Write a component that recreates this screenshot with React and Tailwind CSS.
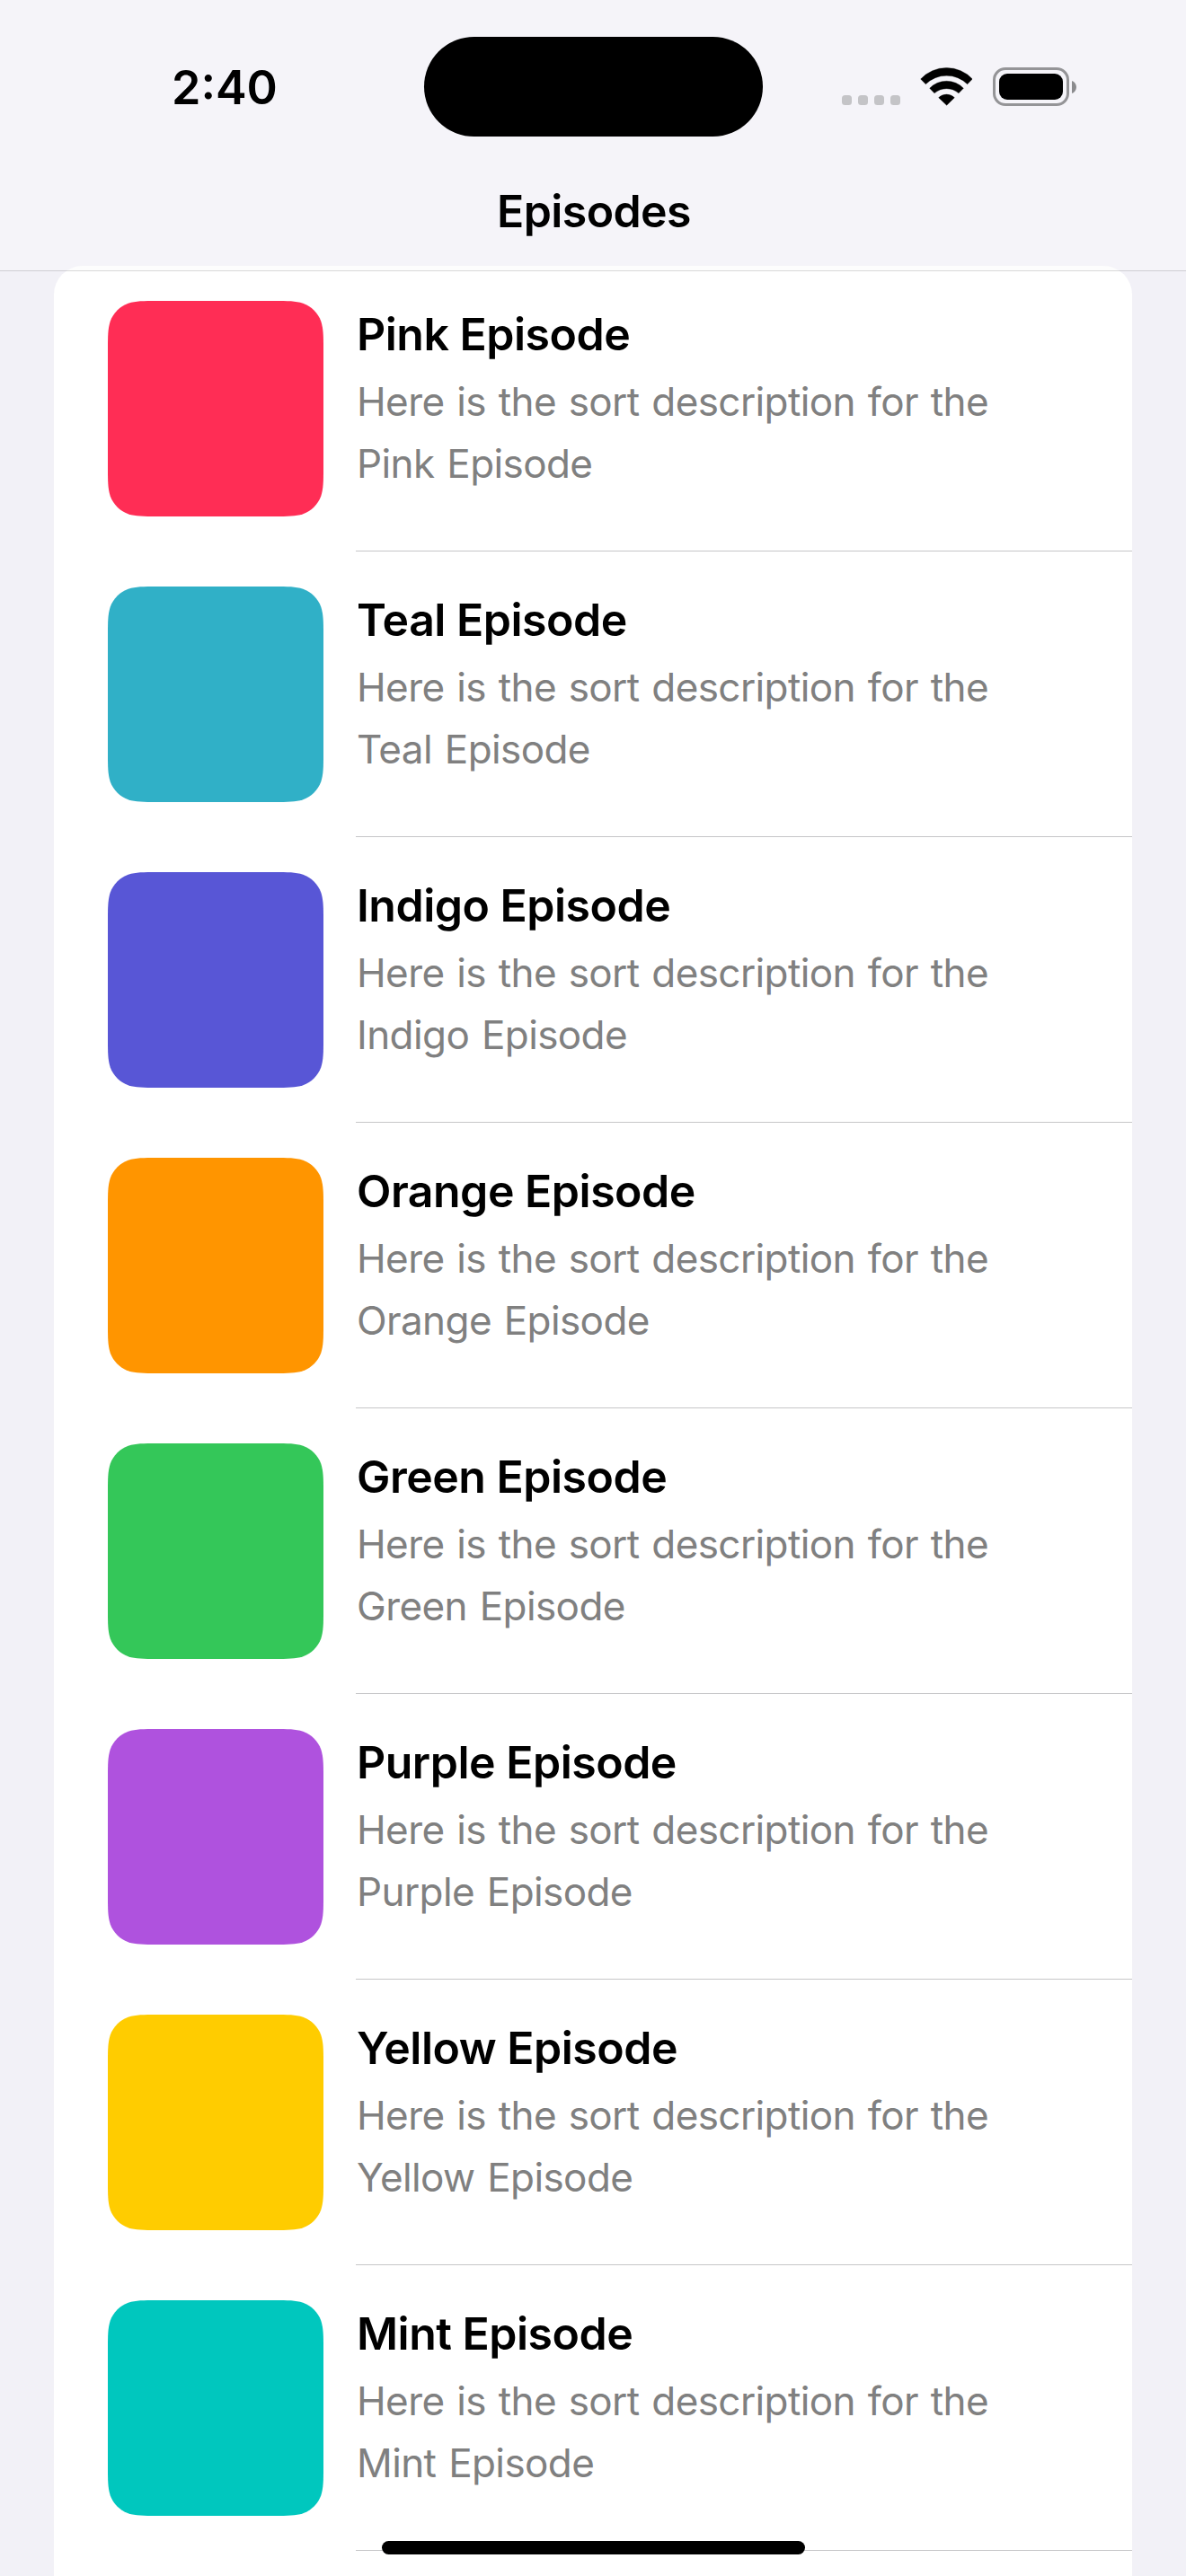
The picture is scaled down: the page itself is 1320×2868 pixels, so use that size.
const episodes = [
  { name: "Pink", fill: "fill-[#ff2d55]" },
  { name: "Teal", fill: "fill-[#30b0c7]" },
  { name: "Indigo", fill: "fill-[#5856d6]" },
  { name: "Orange", fill: "fill-[#ff9500]" },
  { name: "Green", fill: "fill-[#34c759]" },
  { name: "Purple", fill: "fill-[#af52de]" },
  { name: "Yellow", fill: "fill-[#ffcc00]" },
  { name: "Mint", fill: "fill-[#00c7be]" },
];

function CellularDots() {
  return (
    <div className="mt-[31px] flex gap-[7px]">
      {[0, 1, 2, 3].map((dot) => (
        <span key={dot} className="size-[11px] rounded-[3.5px] bg-[#c4c4c7]" />
      ))}
    </div>
  );
}

function WifiIcon() {
  return (
    <svg className="h-[43px] w-[58px]" viewBox="372 74 174 129">
      <path
        d="M374 113A118 118 0 0 1 547 113L530 130A99 99 0 0 0 391 130ZM404 144A78 78 0 0 1 517 144L501 160A62 62 0 0 0 420 160ZM434 175A38 38 0 0 1 487 175L461 201Z"
        fill="#000"
        stroke="#000"
        strokeWidth="1"
        strokeLinejoin="round"
      />
    </svg>
  );
}

function BatteryIcon() {
  return (
    <div className="flex items-center gap-[3px]">
      <div className="h-[43px] w-[85px] rounded-[14px] border-[3px] border-[#949497] p-1">
        <div className="h-[29px] w-[71px] rounded-[9px] bg-black" />
      </div>
      <svg className="h-[14px] w-[5px]" viewBox="0 0 5 14">
        <path d="M0 0C3 1 5 4 5 7S3 13 0 14Z" fill="#8b8b8e" />
      </svg>
    </div>
  );
}

function Artwork({ fill }) {
  return (
    <svg className={`size-[240px] shrink-0 ${fill}`} viewBox="0 0 240 240">
      <path d="M55 0H185C200.8 0 208.7 0 217.3 2.7C226.6 6.1 233.9 13.4 237.3 22.7C240 31.3 240 39.2 240 55V185C240 200.8 240 208.7 237.3 217.3C233.9 226.6 226.6 233.9 217.3 237.3C208.7 240 200.8 240 185 240H55C39.2 240 31.3 240 22.7 237.3C13.4 233.9 6.1 226.6 2.7 217.3C0 208.7 0 200.8 0 185V55C0 39.2 0 31.3 2.7 22.7C6.1 13.4 13.4 6.1 22.7 2.7C31.3 0 39.2 0 55 0Z" />
    </svg>
  );
}

function EpisodeRow({ name, fill }) {
  return (
    <li className="flex h-[318px] pt-[39px] pl-[60px]">
      <Artwork fill={fill} />
      <div className="ml-9 flex-1 border-b border-[#c6c6c8] pt-[7px] pl-px">
        <h2 className="text-[50px] leading-[60px] font-semibold tracking-[-0.5px] text-black">
          {name} Episode
        </h2>
        <p className="mt-[10.5px] w-[760px] text-[44px] leading-[69px] tracking-[-0.6px] text-[#808080] [word-spacing:2px]">
          Here is the sort description for the {name} Episode
        </p>
      </div>
    </li>
  );
}

export default function App() {
  return (
    <div className="relative h-[2868px] w-[1320px] overflow-hidden bg-[#f2f1f7] font-[Inter,sans-serif]">
      <header className="relative h-[302px] bg-[#f5f4f9]">
        <div className="flex h-[205px] justify-between pt-[41px]">
          <div className="w-[472px] pt-[25px] pl-[191px] text-[52px] leading-[64px] font-semibold text-black">
            2:40
          </div>
          <div className="h-[111px] w-[377px] rounded-full bg-black" />
          <div className="flex w-[471px] items-start pt-[34px] pl-[88px]">
            <CellularDots />
            <div className="ml-[22px]">
              <WifiIcon />
            </div>
            <div className="ml-[23px]">
              <BatteryIcon />
            </div>
          </div>
        </div>
        <h1 className="pl-0.5 text-center text-[50px] leading-[60px] font-semibold tracking-[-0.6px] text-black">
          Episodes
        </h1>
        <div className="absolute bottom-0 left-0 z-20 h-px w-full bg-black/15" />
      </header>
      <main className="relative z-10 mx-[60px] -mt-1.5">
        <ul className="overflow-hidden rounded-t-[32px] bg-[linear-gradient(#fdfdfd_5px,#fff_5px)]">
          {episodes.map((episode) => (
            <EpisodeRow key={episode.name} {...episode} />
          ))}
          <li className="h-[318px]" />
        </ul>
      </main>
      <div className="absolute bottom-6 left-[425px] z-20 h-[15px] w-[471px] rounded-full bg-black" />
    </div>
  );
}
